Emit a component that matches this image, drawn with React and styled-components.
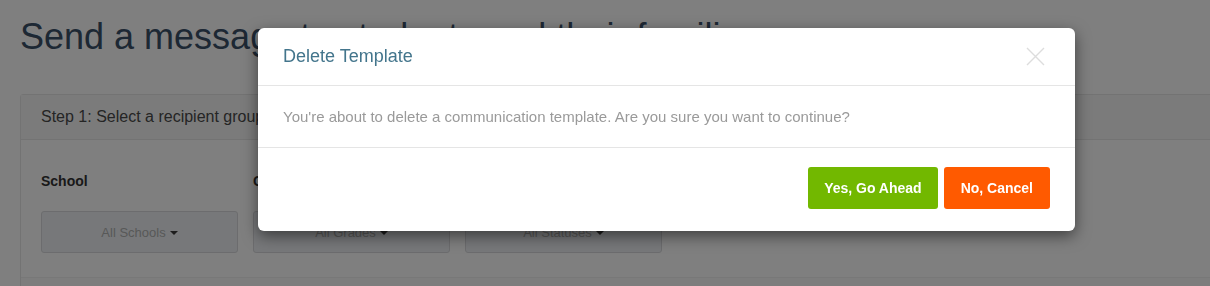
import React from "react";
import styled, { createGlobalStyle } from "styled-components";

const GlobalStyle = createGlobalStyle`
  html, body {
    margin: 0;
    padding: 0;
    background: #ffffff;
    overflow: hidden;
    font-family: "Liberation Sans", Arial, sans-serif;
  }
`;

const Page = styled.div`
  padding: 17px 0 0 20px;
  height: 286px;
  box-sizing: border-box;
`;

const PageTitle = styled.h1`
  margin: 0 0 37px 0;
  font-size: 36px;
  font-weight: normal;
  color: #3b5068;
  line-height: 40px;
  white-space: nowrap;
`;

const Panel = styled.div`
  margin-right: -20px;
  border: 1px solid #e6e6e6;
  border-radius: 3px;
  background: #ffffff;
`;

const PanelHeading = styled.div`
  height: 44px;
  display: flex;
  align-items: center;
  padding: 0 20px;
  background: #f7f7f7;
  border-bottom: 1px solid #e6e6e6;
  font-size: 16px;
  color: #4a4a4a;
`;

const PanelBody = styled.div`
  padding: 34px 20px 24px;
  display: grid;
  grid-template-columns: repeat(3, 197px);
  column-gap: 15px;
  border-bottom: 1px solid #f0f0f0;
`;

const Field = styled.div`
  display: flex;
  flex-direction: column;
  gap: 23px;
`;

const Label = styled.div`
  font-size: 14px;
  font-weight: bold;
  color: #333333;
  line-height: 14px;
`;

const Dropdown = styled.div`
  height: 42px;
  box-sizing: border-box;
  border: 1px solid #d8d9dc;
  border-radius: 3px;
  background: #eff1f5;
  display: flex;
  align-items: center;
  justify-content: center;
  gap: 4px;
  font-size: 13px;
  color: #b0b0b0;
`;

const Caret = styled.span`
  width: 0;
  height: 0;
  border-left: 4px solid transparent;
  border-right: 4px solid transparent;
  border-top: 4px solid #3a3a3a;
  margin-top: 1px;
`;

const PanelFooter = styled.div`
  height: 20px;
  background: #fafafa;
`;

const Backdrop = styled.div`
  position: fixed;
  inset: 0;
  background: rgba(0, 0, 0, 0.5);
`;

const Modal = styled.div`
  position: absolute;
  left: 258px;
  top: 28px;
  width: 817px;
  background: #ffffff;
  border-radius: 6px;
  box-shadow: 0 5px 15px rgba(0, 0, 0, 0.5);
`;

const ModalHeader = styled.div`
  height: 57px;
  padding: 0 25px;
  display: flex;
  align-items: center;
  justify-content: space-between;
  border-bottom: 1px solid #e5e5e5;
`;

const ModalTitle = styled.h4`
  margin: 0;
  font-size: 18px;
  font-weight: normal;
  color: #43758c;
`;

const CloseButton = styled.button`
  border: none;
  background: none;
  padding: 0;
  margin-right: 5px;
  width: 20px;
  height: 20px;
  display: flex;
  align-items: center;
  justify-content: center;
  cursor: pointer;
`;

const ModalBody = styled.div`
  height: 61px;
  padding: 0 25px;
  display: flex;
  align-items: center;
  border-bottom: 1px solid #e5e5e5;
  font-size: 15px;
  color: #9a9a9a;
`;

const ModalFooter = styled.div`
  padding: 19px 25px 22px;
  display: flex;
  justify-content: flex-end;
  gap: 6px;
`;

const ActionButton = styled.button`
  height: 42px;
  padding: 0 ${(p) => p.$pad}px;
  border: none;
  border-radius: 3px;
  background: ${(p) => p.$color};
  color: #ffffff;
  font-family: "Liberation Sans", Arial, sans-serif;
  font-size: 14px;
  font-weight: bold;
  cursor: pointer;
`;

const fields = [
  { label: "School", value: "All Schools" },
  { label: "Grade", value: "All Grades" },
  { label: "Status", value: "All Statuses" },
];

export default function App() {
  return (
    <>
      <GlobalStyle />
      <Page>
        <PageTitle>Send a message to students and their families</PageTitle>
        <Panel>
          <PanelHeading>Step 1: Select a recipient group</PanelHeading>
          <PanelBody>
            {fields.map((f) => (
              <Field key={f.label}>
                <Label>{f.label}</Label>
                <Dropdown>
                  {f.value}
                  <Caret />
                </Dropdown>
              </Field>
            ))}
          </PanelBody>
          <PanelFooter />
        </Panel>
      </Page>
      <Backdrop />
      <Modal>
        <ModalHeader>
          <ModalTitle>Delete Template</ModalTitle>
          <CloseButton aria-label="Close">
            <svg width="19" height="19" viewBox="0 0 19 19">
              <path d="M1 1L18 18M18 1L1 18" stroke="#dddddd" strokeWidth="1.4" fill="none" />
            </svg>
          </CloseButton>
        </ModalHeader>
        <ModalBody>
          You're about to delete a communication template. Are you sure you want to continue?
        </ModalBody>
        <ModalFooter>
          <ActionButton $color="#72b800" $pad={16}>Yes, Go Ahead</ActionButton>
          <ActionButton $color="#ff5a00" $pad={17}>No, Cancel</ActionButton>
        </ModalFooter>
      </Modal>
    </>
  );
}
